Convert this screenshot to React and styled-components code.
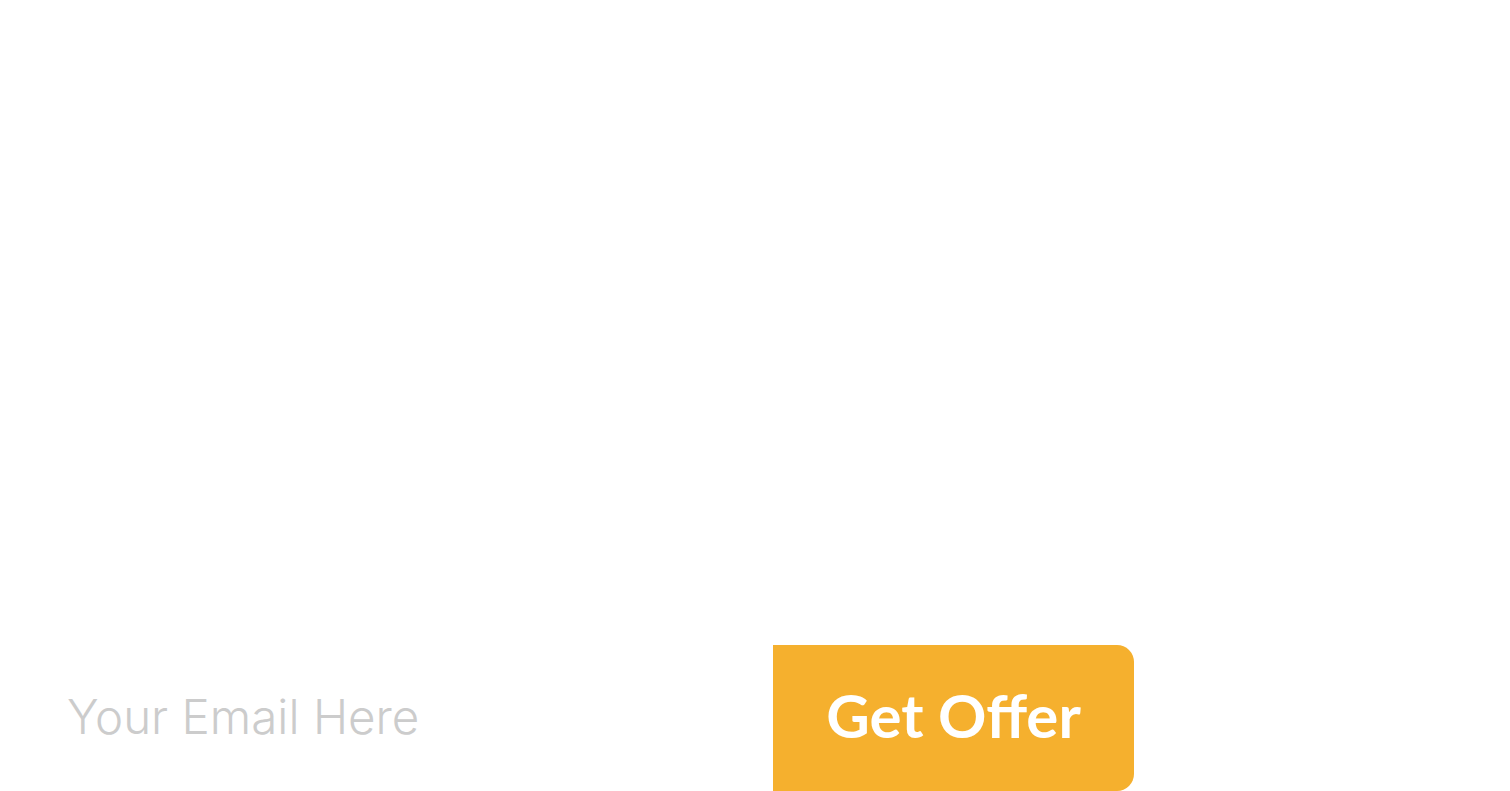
import React from "react";
import styled, { createGlobalStyle } from "styled-components";

const Global = createGlobalStyle`
  html, body {
    margin: 0;
    padding: 0;
    background: #ffffff;
  }
  * {
    box-sizing: border-box;
  }
`;

export default function App() {
  return (
    <>
      <Global />
      <Page>
        <Form onSubmit={(e) => e.preventDefault()}>
          <EmailInput type="email" placeholder="Your Email Here" />
          <OfferButton type="submit">Get Offer</OfferButton>
        </Form>
      </Page>
    </>
  );
}

const Page = styled.div`
  height: 791px;
  display: flex;
  flex-direction: column;
  justify-content: flex-end;
  overflow: hidden;
`;

const Form = styled.form`
  display: flex;
  align-items: stretch;
  height: 146px;
  margin: 0;
`;

const EmailInput = styled.input`
  width: 773px;
  border: none;
  outline: none;
  background: transparent;
  padding: 0 0 4px 67px;
  font-family: Inter, "Noto Sans", sans-serif;
  font-weight: 300;
  font-size: 47.5px;
  letter-spacing: 0;
  color: #555;
  &::placeholder {
    color: #cccccc;
  }
`;

const OfferButton = styled.button`
  width: 361px;
  border: none;
  border-radius: 0 17px 17px 0;
  background: #f5b02e;
  color: #ffffff;
  font-family: Lato, "Noto Sans", sans-serif;
  font-weight: 700;
  font-size: 60px;
  letter-spacing: 0;
  cursor: pointer;
  padding: 0 0 7px 0;
`;
